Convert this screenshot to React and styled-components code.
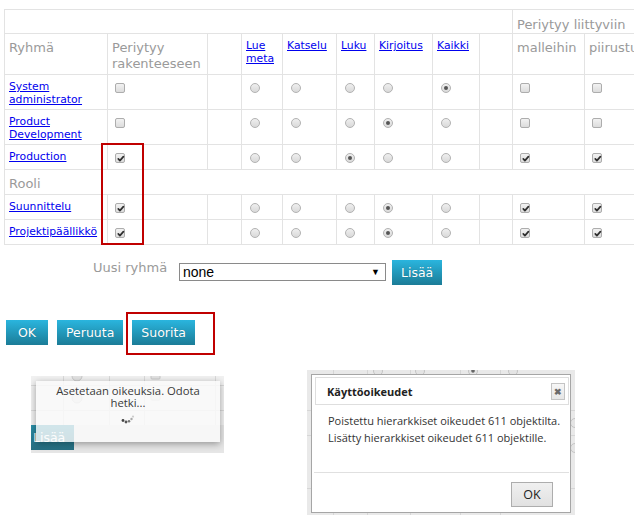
import React from "react";
import styled, { createGlobalStyle } from "styled-components";

const Global = createGlobalStyle`
  html, body { margin: 0; padding: 0; overflow: hidden; background: #fff; }
  body { font-family: "DejaVu Sans", Verdana, sans-serif; }
`;

const Page = styled.div`
  width: 720px;
  padding: 9px 0 0 4px;
`;

const TableWrap = styled.div`
  position: relative;
  width: 680px;
`;

const Grid = styled.table`
  border-collapse: collapse;
  table-layout: fixed;
  width: 680px;
`;

const Row = styled.tr`
  height: ${(p) => p.$h}px;
`;

const Cell = styled.td`
  border: 1px solid #e3e3e3;
  padding: 6px 4px 0;
  vertical-align: ${(p) => (p.$middle ? "middle" : "top")};
  text-align: left;
  overflow: hidden;
  white-space: ${(p) => (p.$nowrap ? "nowrap" : "normal")};
`;

const HeadText = styled.span`
  display: block;
  color: #9a9a9a;
  font-size: 13px;
  line-height: 15.6px;
`;

const Link = styled.a`
  display: block;
  color: #0000ee;
  text-decoration: underline;
  font-size: 10.8px;
  line-height: 12.6px;
  cursor: pointer;
`;

const Box = styled.span`
  display: block;
  width: 10px;
  height: 10px;
  margin: 2px 0 0 3px;
  box-sizing: border-box;
  border: 1px solid #adadad;
  border-radius: 2px;
  background: linear-gradient(#f2f2f2, #dcdcdc);
  position: relative;
  svg { position: absolute; left: 0; top: 0; }
`;

const Radio = styled.span`
  display: block;
  width: 10px;
  height: 10px;
  margin: 2px 0 0 4px;
  box-sizing: border-box;
  border: 1px solid #b3b3b3;
  border-radius: 50%;
  background: linear-gradient(#efefef, #d9d9d9);
  position: relative;
  &::after {
    content: "";
    display: ${(p) => (p.$on ? "block" : "none")};
    position: absolute;
    left: 2px;
    top: 2px;
    width: 4px;
    height: 4px;
    border-radius: 50%;
    background: #555;
  }
`;

const Frame = styled.span`
  position: absolute;
  left: ${(p) => p.$l}px;
  top: ${(p) => p.$t}px;
  width: ${(p) => p.$w}px;
  height: ${(p) => p.$hh}px;
  box-sizing: border-box;
  border: 2px solid #c00000;
  pointer-events: none;
`;

const AddRow = styled.div`
  display: flex;
  align-items: flex-start;
  margin: 15px 0 0 89px;
`;

const Label = styled.span`
  color: #9a9a9a;
  font-size: 13px;
  line-height: 15px;
  width: 86px;
`;

const Select = styled.div`
  width: 207px;
  height: 18px;
  margin-top: 3px;
  box-sizing: border-box;
  border: 1px solid #8a8a8a;
  background: #fff;
  display: flex;
  align-items: center;
  justify-content: space-between;
  padding: 0 5px 0 3px;
  font-family: "Liberation Sans", Arial, sans-serif;
  font-size: 14px;
  color: #000;
`;

const Arrow = styled.span`
  font-size: 9px;
  line-height: 1;
`;

const Button = styled.button`
  height: 25px;
  min-width: ${(p) => p.$min || 0}px;
  padding: 0 9px;
  border: none;
  background: linear-gradient(#2ab5de, #1b7c97);
  color: #fff;
  font-family: "DejaVu Sans", Verdana, sans-serif;
  font-size: 12.5px;
  text-shadow: 0 0 1px rgba(0, 0, 0, 0.25);
  cursor: pointer;
  margin-left: ${(p) => p.$ml || 0}px;
`;

const ButtonRow = styled.div`
  display: flex;
  align-items: flex-start;
  gap: 9px;
  margin: 35px 0 0 2px;
`;

const Anchor = styled.span`
  position: relative;
  display: inline-flex;
`;

const Shots = styled.div`
  display: flex;
  align-items: flex-start;
  margin: 25px 0 0 27px;
  gap: 83px;
`;

const Shot = styled.div`
  position: relative;
  overflow: hidden;
  width: ${(p) => p.$w}px;
  height: ${(p) => p.$hh}px;
  margin-top: ${(p) => p.$mt || 0}px;
  background: #eaeaea;
  flex: none;
  > svg { position: absolute; left: 0; top: 0; }
`;

const GhostButton = styled.span`
  position: absolute;
  left: 0;
  top: 49px;
  width: 43px;
  height: 25px;
  background: linear-gradient(#2a8fa8, #276f82);
  color: #fff;
  font-family: "DejaVu Sans", Verdana, sans-serif;
  font-size: 12.5px;
  line-height: 25px;
  padding-left: 2px;
  box-sizing: border-box;
`;

const Toast = styled.div`
  position: absolute;
  left: 5px;
  top: 5px;
  width: 184px;
  height: 61px;
  background: rgba(251, 251, 251, 0.8);
  box-shadow: 0 2px 7px rgba(0, 0, 0, 0.35);
  text-align: center;
  font-family: "Open Sans", "Segoe UI", sans-serif;
  font-size: 11.3px;
  line-height: 11.6px;
  color: #3a3a3a;
  padding-top: 4px;
  box-sizing: border-box;
`;

const ToastText = styled.div`
  padding: 0 12px;
`;

const Spinner = styled.div`
  display: flex;
  justify-content: center;
  margin-top: 7px;
`;

const Dialog = styled.div`
  position: absolute;
  left: 4px;
  top: 4px;
  width: 260px;
  height: 139px;
  box-sizing: border-box;
  background: #fff;
  border: 1px solid #a6a6a6;
  display: flex;
  flex-direction: column;
  font-family: "Open Sans", "Segoe UI", sans-serif;
`;

const DialogHead = styled.div`
  height: 28px;
  margin: 2px 1px 0 3px;
  box-sizing: border-box;
  border: 1px solid #dedede;
  display: flex;
  align-items: center;
  justify-content: space-between;
  padding: 0 3px 0 11px;
  font-size: 11px;
  font-weight: 700;
  color: #222;
`;

const Close = styled.span`
  width: 14px;
  height: 17px;
  box-sizing: border-box;
  border: 1px solid #c4c4c4;
  background: linear-gradient(#f7f7f7, #e6e6e6);
  display: flex;
  align-items: center;
  justify-content: center;
  color: #6a6a6a;
  font-size: 9px;
  font-weight: 700;
`;

const DialogBody = styled.div`
  flex: 1;
  padding: 7px 0 0 14px;
  font-size: 11px;
  line-height: 17px;
  color: #333;
  white-space: nowrap;
  border-bottom: 1px solid #e0e0e0;
  margin: 0 1px 0 2px;
`;

const DialogFoot = styled.div`
  display: flex;
  justify-content: flex-end;
  padding: 9px 17px 5px 0;
`;

const PlainButton = styled.button`
  width: 42px;
  height: 25px;
  box-sizing: border-box;
  border: 1px solid #adadad;
  background: linear-gradient(#f0f0f0, #e1e1e1);
  font-family: "Open Sans", "Segoe UI", sans-serif;
  font-size: 12.5px;
  color: #222;
  padding: 0;
`;

const CheckMark = () => (
  <svg width="10" height="10" viewBox="0 0 10 10">
    <path d="M2.3 4.9 L3.9 6.6 L7.4 2.6" fill="none" stroke="#2e2e2e" strokeWidth="1.7" strokeLinecap="round" strokeLinejoin="round" />
  </svg>
);

const Check = ({ on }) => <Box>{on ? <CheckMark /> : null}</Box>;

const cols = [103, 100, 34, 41, 54, 38, 58, 47, 33, 72, 100];
const rights = ["Lue meta", "Katselu", "Luku", "Kirjoitus", "Kaikki"];

const groups = [
  { name: "System administrator", inh: false, r: 4, m: false, p: false, h: 35 },
  { name: "Product Development", inh: false, r: 3, m: false, p: false, h: 35 },
  { name: "Production", inh: true, r: 2, m: true, p: true, h: 25 },
];
const roles = [
  { name: "Suunnittelu", inh: true, r: 3, m: true, p: true, h: 25 },
  { name: "Projektipäällikkö", inh: true, r: 3, m: true, p: true, h: 25 },
];

const DataRow = ({ d }) => (
  <Row $h={d.h}>
    <Cell>
      <Link>{d.name}</Link>
    </Cell>
    <Cell>
      <Check on={d.inh} />
    </Cell>
    <Cell />
    {rights.map((r, i) => (
      <Cell key={r}>
        <Radio $on={d.r === i} />
      </Cell>
    ))}
    <Cell />
    <Cell>
      <Check on={d.m} />
    </Cell>
    <Cell>
      <Check on={d.p} />
    </Cell>
  </Row>
);

const LoadBackdrop = () => (
  <svg width="193" height="77" viewBox="0 0 193 77">
    <rect width="193" height="77" fill="#e6e6e6" />
    <rect x="0" y="0" width="193" height="49" fill="#f1f1f1" />
    <g stroke="#d9d9d9" strokeWidth="1">
      <line x1="32.5" y1="0" x2="32.5" y2="49" />
      <line x1="78.5" y1="0" x2="78.5" y2="49" />
      <line x1="113.5" y1="0" x2="113.5" y2="49" />
      <line x1="184.5" y1="0" x2="184.5" y2="49" />
      <line x1="0" y1="9.5" x2="193" y2="9.5" />
      <line x1="0" y1="34.5" x2="193" y2="34.5" />
    </g>
    <g fill="#e2e2e2" stroke="#c8c8c8">
      <circle cx="46" cy="0" r="5" />
      <circle cx="46" cy="22" r="5" />
      <rect x="120" y="-4" width="9" height="7" rx="1" />
      <rect x="120" y="15" width="9" height="9" rx="1" />
    </g>
  </svg>
);

const DialogBackdrop = () => (
  <svg width="268" height="145" viewBox="0 0 268 145">
    <rect width="268" height="145" fill="#e9e9e9" />
    <g stroke="#d6d6d6" strokeWidth="1">
      <line x1="26.5" y1="0" x2="26.5" y2="145" />
      <line x1="60.5" y1="0" x2="60.5" y2="145" />
      <line x1="103.5" y1="0" x2="103.5" y2="145" />
      <line x1="153.5" y1="0" x2="153.5" y2="145" />
      <line x1="193.5" y1="0" x2="193.5" y2="145" />
      <line x1="0" y1="40.5" x2="268" y2="40.5" />
      <line x1="0" y1="65.5" x2="268" y2="65.5" />
      <line x1="0" y1="118.5" x2="268" y2="118.5" />
    </g>
    <g fill="#e4e4e4" stroke="#c4c4c4">
      <circle cx="71" cy="1" r="4.5" />
      <circle cx="113" cy="1" r="4.5" />
      <circle cx="166" cy="1" r="4.5" />
      <circle cx="206" cy="1" r="4.5" />
      <circle cx="268" cy="53" r="4.5" />
      <circle cx="268" cy="78" r="4.5" />
    </g>
    <circle cx="166" cy="1" r="1.8" fill="#666" />
  </svg>
);

const Dots = () => (
  <svg width="14" height="9" viewBox="0 0 14 9">
    <circle cx="2" cy="5.5" r="1.4" fill="#444" />
    <circle cx="5" cy="7" r="1.4" fill="#555" />
    <circle cx="8" cy="6.3" r="1.3" fill="#777" />
    <circle cx="10.5" cy="4" r="1.2" fill="#aaa" />
    <circle cx="12" cy="1.6" r="1.1" fill="#ccc" />
  </svg>
);

export default function App() {
  return (
    <>
      <Global />
      <Page>
        <TableWrap>
          <Grid>
            <colgroup>
              {cols.map((w, i) => (
                <col key={i} style={{ width: w }} />
              ))}
            </colgroup>
            <tbody>
              <Row $h={24}>
                <Cell colSpan={9} />
                <Cell colSpan={2} $middle $nowrap>
                  <HeadText>Periytyy liittyviin</HeadText>
                </Cell>
              </Row>
              <Row $h={41}>
                <Cell>
                  <HeadText>Ryhmä</HeadText>
                </Cell>
                <Cell>
                  <HeadText>Periytyy rakenteeseen</HeadText>
                </Cell>
                <Cell />
                {rights.map((r) => (
                  <Cell key={r}>
                    <Link>{r}</Link>
                  </Cell>
                ))}
                <Cell />
                <Cell $nowrap>
                  <HeadText>malleihin</HeadText>
                </Cell>
                <Cell $nowrap>
                  <HeadText>piirustuksiin</HeadText>
                </Cell>
              </Row>
              {groups.map((d) => (
                <DataRow key={d.name} d={d} />
              ))}
              <Row $h={25}>
                <Cell colSpan={11}>
                  <HeadText>Rooli</HeadText>
                </Cell>
              </Row>
              {roles.map((d) => (
                <DataRow key={d.name} d={d} />
              ))}
            </tbody>
          </Grid>
          <Frame $l={97} $t={134} $w={43} $hh={102} />
        </TableWrap>

        <AddRow>
          <Label>Uusi ryhmä</Label>
          <Select>
            <span>none</span>
            <Arrow>▼</Arrow>
          </Select>
          <Button $ml={6}>Lisää</Button>
        </AddRow>

        <ButtonRow>
          <Button $min={42}>OK</Button>
          <Button>Peruuta</Button>
          <Anchor>
            <Button>Suorita</Button>
            <Frame $l={-6} $t={-8} $w={89} $hh={43} />
          </Anchor>
        </ButtonRow>

        <Shots>
          <Shot $w={193} $hh={77} $mt={6}>
            <LoadBackdrop />
            <GhostButton>Lisää</GhostButton>
            <Toast>
              <ToastText>Asetetaan oikeuksia. Odota hetki...</ToastText>
              <Spinner>
                <Dots />
              </Spinner>
            </Toast>
          </Shot>
          <Shot $w={268} $hh={145}>
            <DialogBackdrop />
            <Dialog>
              <DialogHead>
                <span>Käyttöoikeudet</span>
                <Close>✖</Close>
              </DialogHead>
              <DialogBody>
                Poistettu hierarkkiset oikeudet 611 objektilta.
                <br />
                Lisätty hierarkkiset oikeudet 611 objektille.
              </DialogBody>
              <DialogFoot>
                <PlainButton>OK</PlainButton>
              </DialogFoot>
            </Dialog>
          </Shot>
        </Shots>
      </Page>
    </>
  );
}
